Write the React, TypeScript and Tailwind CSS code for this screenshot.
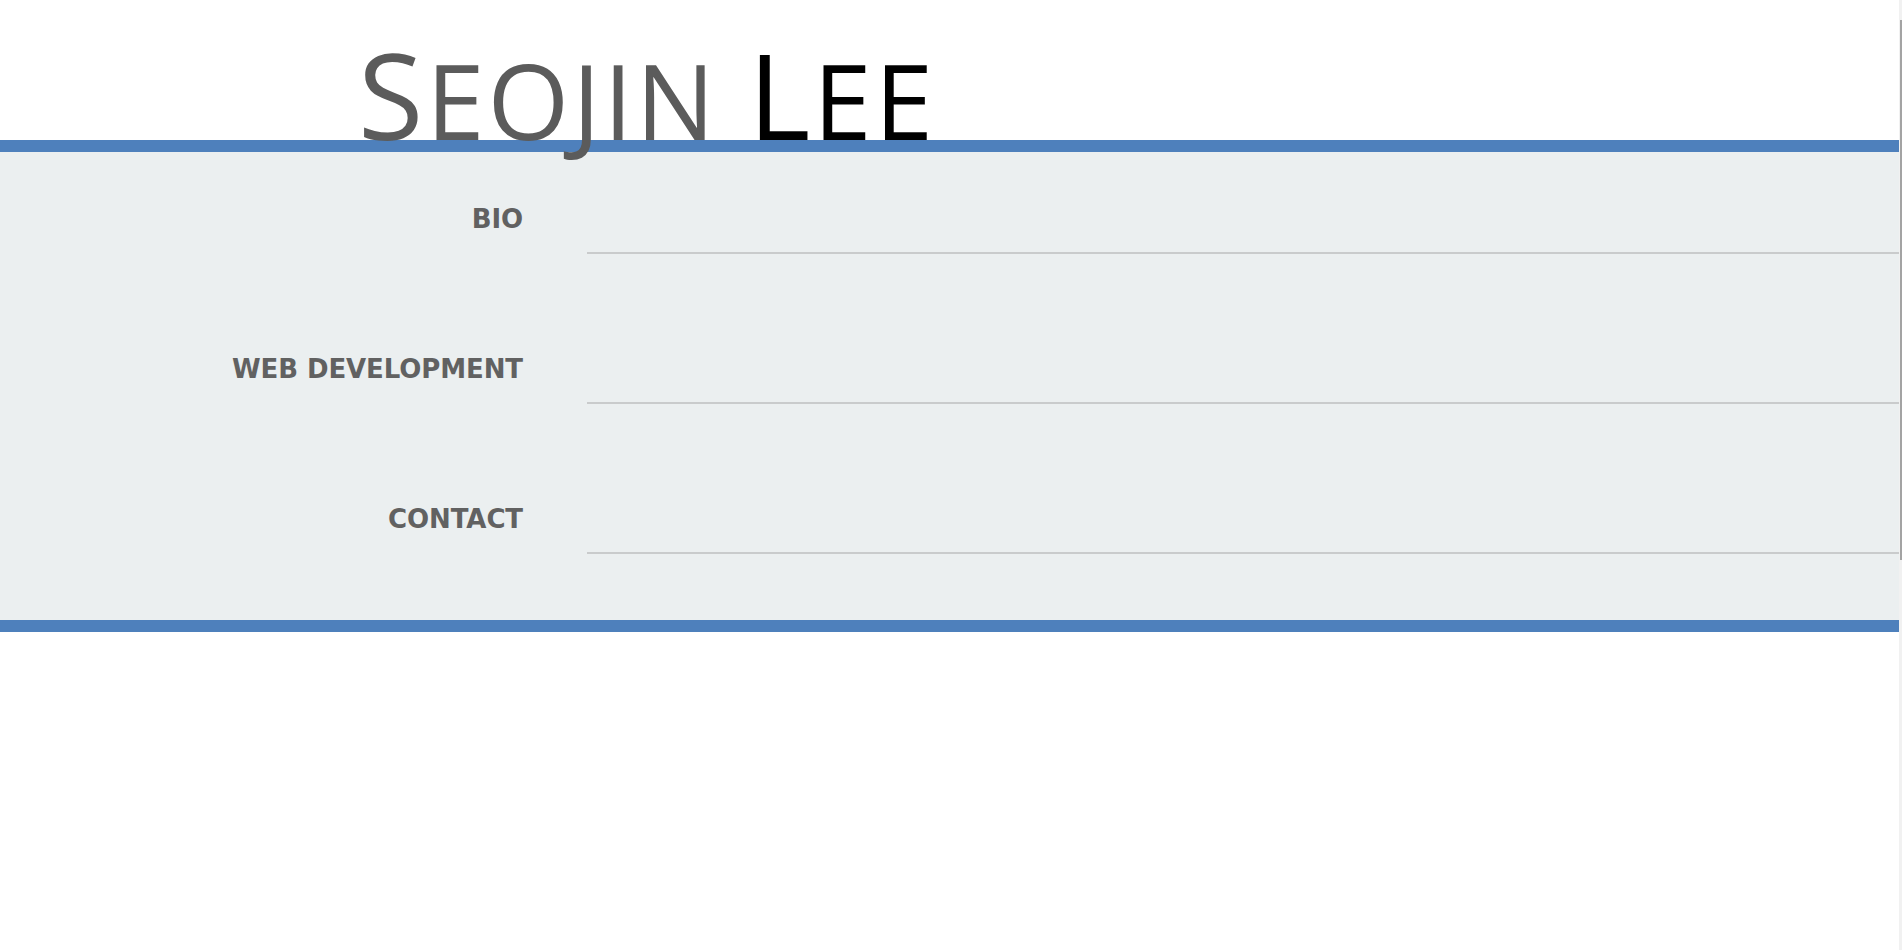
const sections = [
  { label: "BIO", height: "h-[102px]" },
  { label: "WEB DEVELOPMENT", height: "h-[150px]" },
  { label: "CONTACT", height: "h-[150px]" },
];

function Title() {
  return (
    <h1
      className="absolute left-[358px] top-[35px] z-10 whitespace-nowrap text-[119px] font-normal leading-none tracking-[3px] text-[#5b5b5b]"
      style={{ fontFamily: '"Open Sans", sans-serif', fontStretch: "92%" }}
    >
      <span>S</span>
      <span className="text-[105px] uppercase">eojin</span>
      <span className="text-[105px]"> </span>
      <span className="text-black">L</span>
      <span className="text-[105px] uppercase text-black">ee</span>
    </h1>
  );
}

export default function App() {
  return (
    <div className="flex min-h-[950px] w-full bg-white">
      <main className="relative flex-1">
        <header className="h-[140px]">
          <Title />
        </header>
        <div className="h-[12px] bg-[#4e80bc]" />
        <section className="bg-[#ebeff0] pb-[66px]">
          {sections.map((s) => (
            <div key={s.label} className={`flex ${s.height}`}>
              <div className="flex w-[523px] shrink-0 items-end justify-end pb-[25px]">
                <span
                  className="text-[26px] font-bold leading-[19px] tracking-[-0.1px] text-[#616161]"
                  style={{ fontFamily: '"DejaVu Sans", sans-serif' }}
                >
                  {s.label}
                </span>
              </div>
              <div className="ml-[64px] flex-1 border-b-2 border-[#c9cbcc]" />
            </div>
          ))}
        </section>
        <div className="h-[12px] bg-[#4e80bc]" />
      </main>
      <aside className="w-[3px] shrink-0 bg-[#f1f1f1] pt-[20px]">
        <div className="ml-[1px] h-[540px] w-[2px] bg-[#a3a3a3]" />
      </aside>
    </div>
  );
}
